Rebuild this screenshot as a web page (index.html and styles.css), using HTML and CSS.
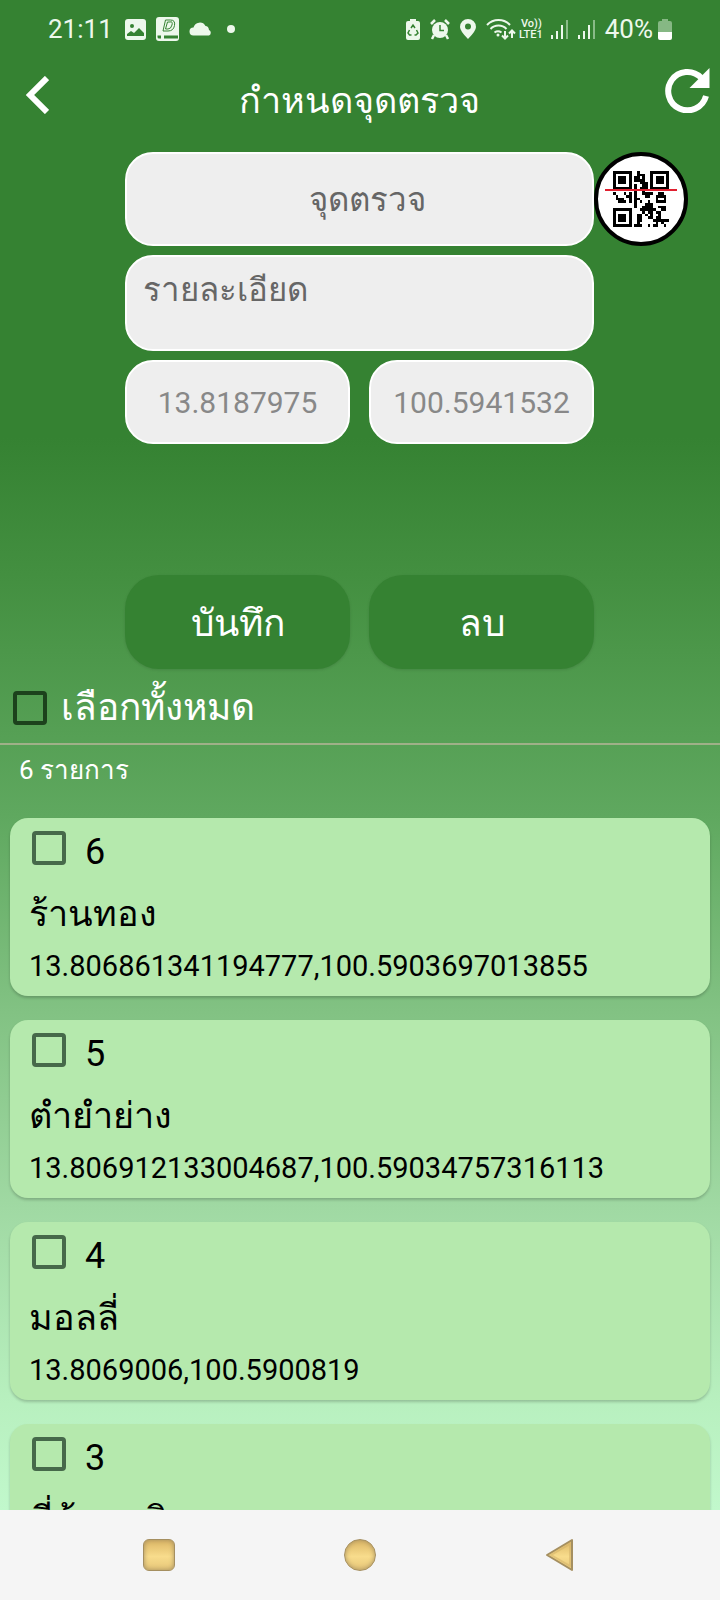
FILE: index.html
```
<!DOCTYPE html>
<html lang="th">
<head>
<meta charset="utf-8">
<meta name="viewport" content="width=device-width, initial-scale=1">
<title>กำหนดจุดตรวจ</title>
<link rel="stylesheet" href="styles.css">
</head>
<body>

<div class="screen">

  <!-- Status bar -->
  <div class="status-bar">
    <div class="status-left">
      <span class="time">21:11</span>
      <svg width="21" height="21" viewBox="0 0 21 21">
        <rect width="21" height="21" rx="3" fill="#edf8ec"/>
        <circle cx="7" cy="7" r="2" fill="#358232"/>
        <path d="M2 17v-2l4-3 3 2 5-5 5 5v3z" fill="#358232"/>
      </svg>
      <svg width="23" height="24" viewBox="0 0 23 24">
        <rect width="23" height="24" rx="3" fill="#edf8ec"/>
        <path d="M9.500 3h5q5 0 4 5.500T12 14H7z M11.500 5l-2 7H12q3 0 4-4t-2-3z" fill="none" stroke="#358232"/>
        <path d="M1.500 18.500H22v3H3q-1.500 0-1.500-1.500z" fill="#358232"/>
        <rect x="5" y="18" width="3" height="4" fill="#edf8ec"/>
      </svg>
      <svg width="24" height="14" viewBox="0 0 24 14">
        <path d="M4.500 13.500a4 4 0 0 1 0-8 6.500 6.500 0 0 1 12-1.500q3 0 3.500 4a3 3 0 0 1 0 5.500z" fill="#edf8ec"/>
      </svg>
      <span class="dot"></span>
    </div>
    <div class="status-right">
      <svg width="14" height="21" viewBox="0 0 14 21">
        <path d="M4 0h6v2h2q2 0 2 2v15q0 2-2 2H2q-2 0-2-2V4q0-2 2-2h2z" fill="#edf8ec"/>
        <path d="M5 9l2-3 2 3M10.500 11l1.500 3-2 2H8.500M5.500 16H3.500L2 14l1.500-3" fill="none" stroke="#358232" stroke-width="1.500"/>
      </svg>
      <svg width="20" height="21" viewBox="0 0 20 21">
        <circle cx="10" cy="11" r="8" fill="#edf8ec"/>
        <path d="M1 5l4-4M19 5l-4-4M4 16l-2 4M16 16l2 4" stroke="#edf8ec" stroke-width="2.500"/>
        <path d="M10 6v5.500h4" fill="none" stroke="#358232" stroke-width="1.500"/>
      </svg>
      <svg width="16" height="20" viewBox="0 0 16 20">
        <path d="M8 0a8 8 0 0 1 8 8q0 4-8 12Q0 12 0 8a8 8 0 0 1 8-8zM8 4.500a3 3 0 1 0 0 6 3 3 0 0 0 0-6z" fill="#edf8ec"/>
      </svg>
      <div class="network">
        <svg width="30" height="22" viewBox="0 0 30 22">
          <path d="M1 7a16 16 0 0 1 23 0M4.500 11a11 11 0 0 1 16 0M8.500 14.500a6 6 0 0 1 7 0" fill="none" stroke="#edf8ec" stroke-width="2"/>
          <circle cx="12" cy="17" r="1.500" fill="#edf8ec"/>
          <path d="M19 13v7M16 17.500l3 3 3-3M26 20v-7M23 15.500l3-3 3 3" fill="none" stroke="#edf8ec" stroke-width="2"/>
        </svg>
        <svg class="volte" width="26" height="26" viewBox="0 0 26 26">
          <text x="2" y="11" font-size="11">Vo))</text>
          <text x="0" y="22" font-size="11">LTE1</text>
        </svg>
      </div>
      <svg width="17" height="20" viewBox="0 0 17 20">
        <path d="M1 16v4M6 12v8M11 6v14" stroke="#edf8ec" stroke-width="2"/>
        <path d="M16 1v19" stroke="#8abb88" stroke-width="2"/>
      </svg>
      <svg width="17" height="20" viewBox="0 0 17 20">
        <path d="M1 16v4M6 12v8M11 6v14" stroke="#edf8ec" stroke-width="2"/>
        <path d="M16 1v19" stroke="#8abb88" stroke-width="2"/>
      </svg>
      <div class="battery">
        <span>40%</span>
        <svg width="14" height="21" viewBox="0 0 14 21">
          <path d="M4 0h6v2h2q2 0 2 2v9H0V4q0-2 2-2h2z" fill="#86b884"/>
          <path d="M0 13h14v6q0 2-2 2H2q-2 0-2-2z" fill="#fff"/>
        </svg>
      </div>
    </div>
  </div>

  <!-- Title bar -->
  <header class="header">
    <button class="icon-btn" type="button" aria-label="Back">
      <svg width="24" height="38" viewBox="0 0 24 38">
        <path d="M22 2L5 19l17 17" fill="none" stroke="#fff" stroke-width="6"/>
      </svg>
    </button>
    <h1>กำหนดจุดตรวจ</h1>
    <button class="icon-btn" type="button" aria-label="Refresh">
      <svg width="45" height="45" viewBox="0 0 45 45">
        <path d="M36 9.500A19.200 19.200 0 1 0 41 28" fill="none" stroke="#fff" stroke-width="6"/>
        <path d="M44.500 0v20h-20z" fill="#fff"/>
      </svg>
    </button>
  </header>

  <form class="form">
    <input class="field point" type="text" placeholder="จุดตรวจ" aria-label="จุดตรวจ">
    <button class="qr-btn" type="button" aria-label="QR">
      <svg width="72" height="56" viewBox="-3 0 27 21" shape-rendering="crispEdges">
        <g fill="none" stroke="#000">
          <path d="M.5.5h6v6h-6zM14.500.5h6v6h-6zM.5 14.500h6v6h-6z"/>
          <path d="M2 3.500h3M16 3.500h3M2 17.500h3" stroke-width="3"/>
          <path d="M9 .5h1M9 1.500h3M8 2.500h2m1 0h1M8 3.500h4M10 4.500h3M8 5.500h1m2 0h2M8 6.500h1m1 0h3M8 7.500h1m2 0h1
            M0 8.500h1m3 0h1m1 0h1m1 0h1m2 0h4m2 0h2M1 9.500h1m3 0h2m1 0h1m3 0h2m2 0h4M1 10.500h3m2 0h1m1 0h2m6 0h1m2 0h1
            M2 11.500h3m1 0h1m1 0h1m1 0h1m2 0h1m2 0h4M8 12.500h1m3 0h3M8 13.500h1m2 0h4m2 0h3M10 14.500h6m2 0h2
            M11 15.500h1m1 0h2m1 0h2M9 16.500h2m1 0h1m1 0h1m2 0h1M9 17.500h2m2 0h2m1 0h2M9 18.500h2m4 0h6M9 19.500h1m6 0h1m1 0h1
            M8 20.500h3m2 0h1m1 0h2m2 0h1"/>
        </g>
        <path d="M-3 7h27" stroke="#e02030" stroke-width=".75"/>
      </svg>
    </button>
    <textarea class="field detail" placeholder="รายละเอียด" aria-label="รายละเอียด"></textarea>
    <div class="pair coords">
      <input class="field" type="text" value="13.8187975" aria-label="Latitude" readonly>
      <input class="field" type="text" value="100.5941532" aria-label="Longitude" readonly>
    </div>
    <div class="pair actions">
      <button class="btn" type="button">บันทึก</button>
      <button class="btn" type="button">ลบ</button>
    </div>
  </form>

  <label class="select-all">
    <input class="check" type="checkbox">
    <span>เลือกทั้งหมด</span>
  </label>

  <p class="count">6 รายการ</p>

  <!-- Checkpoint list -->
  <div class="list">
    <div class="card">
      <label class="card-top"><input class="check" type="checkbox"> <span>6</span></label>
      <div class="name">ร้านทอง</div>
      <div class="latlng">13.806861341194777,100.5903697013855</div>
    </div>
    <div class="card">
      <label class="card-top"><input class="check" type="checkbox"> <span>5</span></label>
      <div class="name">ตำยำย่าง</div>
      <div class="latlng">13.806912133004687,100.59034757316113</div>
    </div>
    <div class="card">
      <label class="card-top"><input class="check" type="checkbox"> <span>4</span></label>
      <div class="name">มอลลี่</div>
      <div class="latlng">13.8069006,100.5900819</div>
    </div>
    <div class="card">
      <label class="card-top"><input class="check" type="checkbox"> <span>3</span></label>
      <div class="name">ที่บ้านสมิง</div>
    </div>
  </div>
</div>

<!-- Android navigation -->
<nav class="nav-bar">
  <button class="nav-btn" type="button" aria-label="Recent apps"><span class="gold square"></span></button>
  <button class="nav-btn" type="button" aria-label="Home"><span class="gold circle"></span></button>
  <button class="nav-btn" type="button" aria-label="Back">
    <svg width="30" height="34" viewBox="0 0 30 34">
      <defs>
        <linearGradient id="gold" x1="0" y1="0" x2="0" y2="1">
          <stop offset="0" stop-color="#dcb665"/>
          <stop offset=".55" stop-color="#f8dc8c"/>
          <stop offset="1" stop-color="#e6c678"/>
        </linearGradient>
      </defs>
      <path d="M2 17L27 2v30z" fill="url(#gold)" stroke="#a58f60" stroke-width="2" stroke-linejoin="round"/>
      <path d="M6 17L25 6v22z" fill="none" stroke="#cfae65" stroke-width="2" stroke-linejoin="round" opacity=".5"/>
    </svg>
  </button>
</nav>

</body>
</html>
```
FILE: styles.css
```
* {
  margin: 0;
  padding: 0;
  box-sizing: border-box;
}

body {
  font-family: Roboto, "Noto Sans", sans-serif;
  display: flex;
  flex-direction: column;
  height: 100vh;
  overflow: hidden;
  color: #fff;
}

svg {
  display: block;
}

button {
  border: none;
  background: none;
  font-family: inherit;
  color: inherit;
  cursor: pointer;
}

.screen {
  flex: 1;
  min-height: 0;
  display: flex;
  flex-direction: column;
  overflow: hidden;
  background: linear-gradient(#358232 0%, #358232 29%, #438f40 38%, #5fa85f 54%, #82c283 67%, #a0d9a3 80%, #b8f0bf 93%, #c1f8cc 100%);
}

/* Status bar */
.status-bar {
  display: flex;
  justify-content: space-between;
  align-items: center;
  flex-shrink: 0;
  height: 58px;
  padding: 0 48px;
  font-size: 26px;
  color: #edf8ec;
}

.status-left,
.status-right {
  display: flex;
  align-items: center;
  gap: 10px;
}

.time {
  margin-right: 2px;
}

.dot {
  width: 8px;
  height: 8px;
  margin-left: 4px;
  border-radius: 50%;
  background: #edf8ec;
}

.network {
  display: flex;
  align-items: center;
  gap: 3px;
  margin-right: -4px;
}

.volte {
  fill: #edf8ec;
  font-weight: 500;
}

.battery {
  display: flex;
  align-items: center;
  gap: 5px;
}

/* Title bar */
.header {
  display: flex;
  justify-content: space-between;
  align-items: flex-start;
  flex-shrink: 0;
  height: 94px;
  padding: 10px 10px 0 25px;
}

.header h1 {
  flex: 1;
  padding-left: 4px;
  font-size: 36px;
  font-weight: 400;
  line-height: 66px;
  text-align: center;
}

.icon-btn:first-child {
  padding-top: 8px;
}

/* Form */
.form {
  display: grid;
  grid-template-columns: 125px 1fr 126px;
  row-gap: 9px;
  flex-shrink: 0;
}

.form > * {
  grid-column: 2;
}

.field {
  width: 100%;
  min-width: 0;
  border: 2px solid #fff;
  border-radius: 28px;
  outline: none;
  background: #eee;
  color: #888;
  font-family: inherit;
  font-size: 30px;
  text-align: center;
}

.field::placeholder {
  color: #666;
}

.point {
  height: 94px;
  padding-left: 16px;
  font-size: 33px;
}

.detail {
  display: block;
  height: 96px;
  padding: 8px 16px;
  font-size: 33px;
  line-height: 50px;
  text-align: left;
  resize: none;
}

.form .qr-btn {
  grid-column: 3;
  grid-row: 1;
  display: flex;
  align-items: center;
  justify-content: center;
  width: 94px;
  height: 94px;
  border: 4px solid #000;
  border-radius: 50%;
  background: #fff;
}

.pair {
  display: flex;
  gap: 19px;
}

.coords .field {
  height: 84px;
}

.actions {
  margin-top: 122px;
}

.btn {
  flex: 1;
  height: 94px;
  border-radius: 34px;
  background: #358232;
  box-shadow: 0 1px 3px rgba(0, 0, 0, 0.12);
  font-size: 37px;
}

/* Checkboxes */
.check {
  appearance: none;
  flex-shrink: 0;
  width: 34px;
  height: 34px;
  border: 4px solid #46694a;
  border-radius: 4px;
}

.check:checked {
  background: #46694a;
}

.select-all {
  display: flex;
  align-items: center;
  gap: 14px;
  flex-shrink: 0;
  height: 76px;
  padding-left: 13px;
  border-bottom: 2px solid #9fb088;
  font-size: 37px;
}

.select-all .check {
  margin-top: 4px;
  border-color: #1c421c;
}

.count {
  flex-shrink: 0;
  padding: 0 19px;
  font-size: 26px;
  line-height: 50px;
}

/* Checkpoint list */
.list {
  display: flex;
  flex-direction: column;
  gap: 24px;
  padding: 23px 10px;
  color: #000;
}

.card {
  flex-shrink: 0;
  height: 178px;
  padding: 8px 19px;
  border-radius: 18px;
  background: #b5e9ad;
  box-shadow: 0 2px 3px rgba(0, 0, 0, 0.2);
}

.card-top {
  display: flex;
  align-items: center;
  gap: 19px;
  height: 52px;
  padding-left: 3px;
  font-size: 36px;
}

.card-top .check {
  margin-bottom: 8px;
}

.name {
  font-size: 36px;
  line-height: 72px;
}

.latlng {
  font-size: 29px;
  line-height: 32px;
}

/* Navigation bar */
.nav-bar {
  display: flex;
  justify-content: center;
  align-items: center;
  gap: 169px;
  flex-shrink: 0;
  height: 90px;
  padding-right: 3px;
  background: #f5f5f5;
}

.gold {
  display: block;
  width: 32px;
  height: 32px;
  border: 1px solid #a58f60;
  background: linear-gradient(#dcb665, #f8dc8c 55%, #e6c678);
  box-shadow: inset 0 0 5px #a58f60;
}

.square {
  border-radius: 6px;
}

.circle {
  border-radius: 50%;
}
```
